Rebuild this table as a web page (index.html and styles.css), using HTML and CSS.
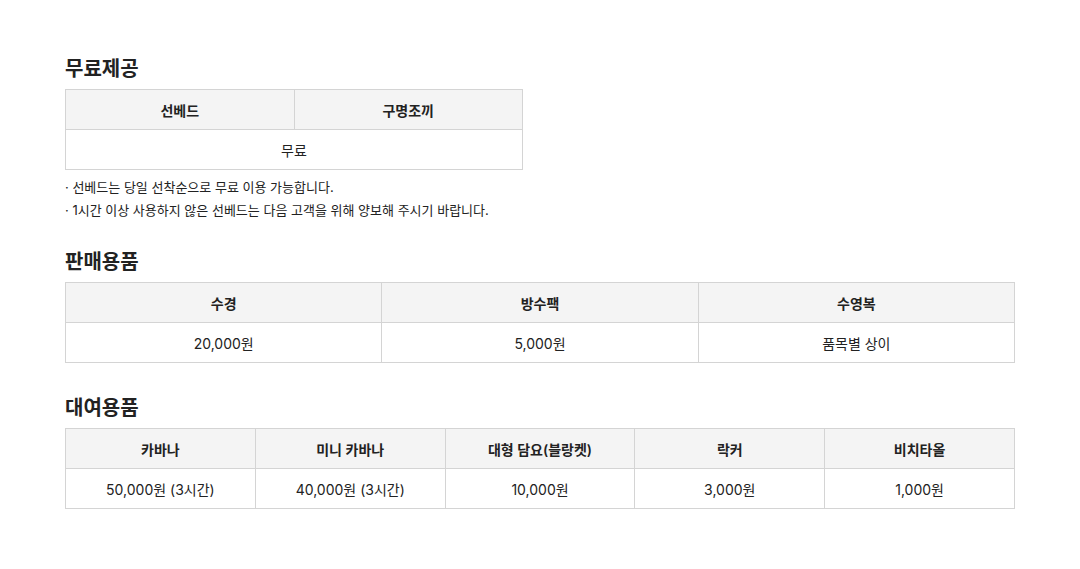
FILE: index.html
```html
<!DOCTYPE html>
<html>
<head>
<title>이용 요금 안내</title>
<link rel="stylesheet" href="styles.css">
</head>
<body>

<div class="content">
  <div class="section">
    <h3 class="title">무료제공</h3>
    <table class="price-table half">
      <tr>
        <th>선베드</th>
        <th>구명조끼</th>
      </tr>
      <tr>
        <td colspan="2">무료</td>
      </tr>
    </table>
    <ul class="notes">
      <li>선베드는 당일 선착순으로 무료 이용 가능합니다.</li>
      <li>1시간 이상 사용하지 않은 선베드는 다음 고객을 위해 양보해 주시기 바랍니다.</li>
    </ul>
  </div>

  <div class="section">
    <h3 class="title">판매용품</h3>
    <table class="price-table">
      <tr>
        <th>수경</th>
        <th>방수팩</th>
        <th>수영복</th>
      </tr>
      <tr>
        <td>20,000원</td>
        <td>5,000원</td>
        <td>품목별 상이</td>
      </tr>
    </table>
  </div>

  <div class="section">
    <h3 class="title">대여용품</h3>
    <table class="price-table">
      <tr>
        <th>카바나</th>
        <th>미니 카바나</th>
        <th>대형 담요(블랑켓)</th>
        <th>락커</th>
        <th>비치타올</th>
      </tr>
      <tr>
        <td>50,000원 (3시간)</td>
        <td>40,000원 (3시간)</td>
        <td>10,000원</td>
        <td>3,000원</td>
        <td>1,000원</td>
      </tr>
    </table>
  </div>
</div>

</body>
</html>
```

FILE: styles.css
```css
body {
  margin: 0;
  font-family: "Inter", "Noto Sans CJK KR", sans-serif;
  color: #222;
  background: #fff;
}
.content {
  width: 950px;
  padding: 55px 0 0 65px;
}
.section {
  margin-bottom: 31px;
}
.title {
  margin: 0 0 6px;
  font-size: 20px;
  line-height: 28px;
  font-weight: 700;
  color: #222;
}
.price-table {
  width: 100%;
  border-collapse: collapse;
  table-layout: fixed;
}
.price-table.half {
  width: 458px;
}
.price-table th,
.price-table td {
  border: 1px solid #d4d4d4;
  height: 39px;
  padding: 0;
  text-align: center;
  font-size: 14px;
  color: #222;
}
.price-table th {
  background-color: #f4f4f4;
  font-weight: 600;
}
.price-table td {
  font-weight: 400;
}
.notes {
  list-style: none;
  margin: 6px 0 -5px;
  padding: 0;
}
.notes li {
  font-size: 13px;
  line-height: 23px;
  color: #222;
}
.notes li:before {
  content: "· ";
}
```
